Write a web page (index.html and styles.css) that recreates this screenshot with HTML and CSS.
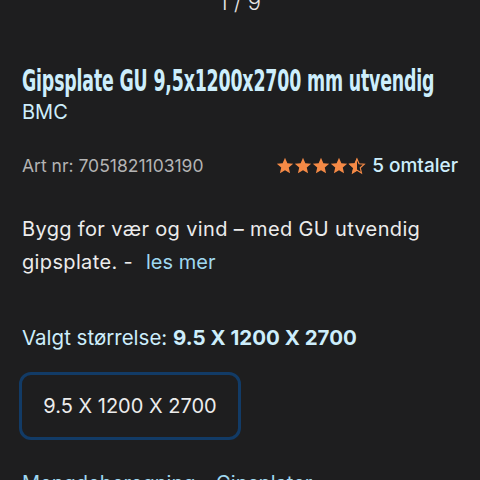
FILE: index.html
```html
<!DOCTYPE html>
<html lang="no">
<head>
    <meta charset="UTF-8">
    <meta name="viewport" content="width=device-width, initial-scale=1.0">
    <title>Gipsplate GU 9,5x1200x2700 mm utvendig</title>
    <link rel="stylesheet" href="styles.css">
</head>
<body>
    <div class="counter">1 / 9</div>

    <div class="product">
        <h1 class="title"><span>Gipsplate GU 9,5x1200x2700 mm utvendig</span></h1>
        <div class="brand">BMC</div>

        <div class="meta-row">
            <span class="art-nr">Art nr: 7051821103190</span>
            <span class="rating">
                <span class="stars">
                    <svg viewBox="1 1 22 22" class="star"><path d="M12 2l2.9 6.6 7.1.6-5.4 4.7 1.6 7-6.2-3.7-6.2 3.7 1.6-7L2 9.2l7.1-.6z"/></svg>
                    <svg viewBox="1 1 22 22" class="star"><path d="M12 2l2.9 6.6 7.1.6-5.4 4.7 1.6 7-6.2-3.7-6.2 3.7 1.6-7L2 9.2l7.1-.6z"/></svg>
                    <svg viewBox="1 1 22 22" class="star"><path d="M12 2l2.9 6.6 7.1.6-5.4 4.7 1.6 7-6.2-3.7-6.2 3.7 1.6-7L2 9.2l7.1-.6z"/></svg>
                    <svg viewBox="1 1 22 22" class="star"><path d="M12 2l2.9 6.6 7.1.6-5.4 4.7 1.6 7-6.2-3.7-6.2 3.7 1.6-7L2 9.2l7.1-.6z"/></svg>
                    <svg viewBox="1 1 22 22" class="star half">
                        <path class="outline" d="M12 3.4l2.5 5.9 6.4.6-4.9 4.3 1.5 6.3-5.5-3.3-5.5 3.3 1.5-6.3-4.9-4.3 6.4-.6z"/>
                        <path d="M12 2v15.6l-6.2 3.7 1.6-7L2 9.2l7.1-.6z"/>
                    </svg>
                </span>
                <span class="review-count">5 omtaler</span>
            </span>
        </div>

        <p class="description">
            Bygg for vær og vind – med GU utvendig gipsplate. -&nbsp;<a href="#" class="read-more">les mer</a>
        </p>

        <div class="size-label">Valgt størrelse: <strong>9.5 X 1200 X 2700</strong></div>

        <div class="size-options">
            <button class="size-btn selected">9.5 X 1200 X 2700</button>
        </div>

        <a href="#" class="calc-link">Mengdeberegning - Gipsplater</a>
    </div>
</body>
</html>
```

FILE: styles.css
```css
* {
    margin: 0;
    padding: 0;
    box-sizing: border-box;
}

body {
    font-family: Inter, 'Liberation Sans', sans-serif;
    background: #1e1e1f;
    color: #ececec;
    width: 480px;
    height: 480px;
    overflow: hidden;
}

.counter {
    text-align: center;
    font-size: 22px;
    font-weight: 300;
    color: #e6e6e6;
    line-height: 22px;
    margin-top: -9px;
    height: 20px;
}

.product {
    padding: 52px 22px 0;
}

.title {
    font-family: 'DejaVu Sans Condensed', 'DejaVu Sans', sans-serif;
    font-weight: 700;
    font-size: 30px;
    line-height: 36px;
    color: #cdeefc;
    white-space: nowrap;
}

.title span {
    display: inline-block;
    transform: scaleX(0.645);
    transform-origin: left center;
    letter-spacing: -0.3px;
}

.brand {
    font-size: 20px;
    line-height: 26px;
    color: #cdeefc;
}

.meta-row {
    display: flex;
    justify-content: space-between;
    align-items: center;
    margin-top: 29px;
}

.art-nr {
    font-size: 17.5px;
    color: #b4b4b4;
}

.rating {
    display: flex;
    align-items: center;
    gap: 6px;
}

.stars {
    display: flex;
}

.star {
    width: 18px;
    height: 18px;
    fill: #f58a46;
}

.star .outline {
    fill: none;
    stroke: #f58a46;
    stroke-width: 1.4;
}

.review-count {
    font-size: 19px;
    font-weight: 500;
    color: #cdeefc;
}

.description {
    font-size: 20px;
    line-height: 33px;
    letter-spacing: 0.35px;
    color: #ececec;
    margin-top: 36px;
}

.read-more {
    color: #9fd8f0;
    text-decoration: none;
    letter-spacing: 0;
    margin-left: 7px;
}

.size-label {
    font-size: 20.5px;
    color: #cdeefc;
    margin-top: 46px;
}

.size-label strong {
    font-weight: 700;
}

.size-options {
    margin-top: 22px;
}

.size-btn {
    font-family: inherit;
    font-size: 20px;
    color: #ececec;
    background: #1e1e1f;
    border: 3px solid #123b66;
    border-radius: 12px;
    width: 222px;
    height: 68px;
    margin-left: -3px;
}

.calc-link {
    display: block;
    margin-top: 31px;
    font-size: 20px;
    color: #9fd8f0;
    text-decoration: none;
}
```
